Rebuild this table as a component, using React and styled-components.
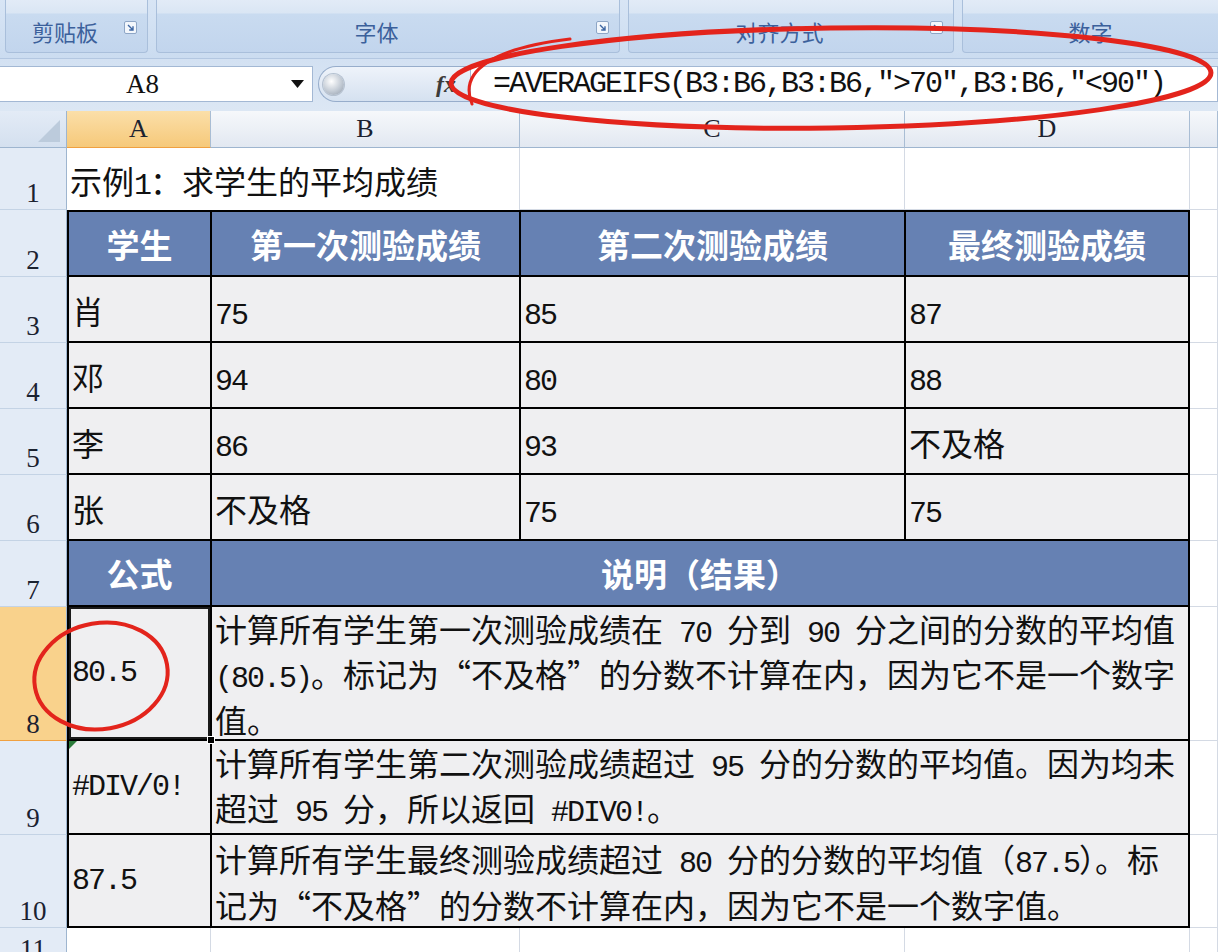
import styled, { createGlobalStyle } from 'styled-components';

const GlobalStyle = createGlobalStyle`
  html, body {
    margin: 0;
    padding: 0;
    background: #ffffff;
    overflow: hidden;
  }
  body {
    font-family: "Noto Sans CJK SC", "Noto Sans", sans-serif;
  }
`;

const columns = ['A', 'B', 'C', 'D', 'E'];

const scores = [
  ['肖', '75', '85', '87'],
  ['邓', '94', '80', '88'],
  ['李', '86', '93', '不及格'],
  ['张', '不及格', '75', '75'],
];

const results = [
  {
    value: '80.5',
    selected: true,
    lines: [
      '计算所有学生第一次测验成绩在 70 分到 90 分之间的分数的平均值',
      '(80.5)。标记为“不及格”的分数不计算在内，因为它不是一个数字',
      '值。',
    ],
  },
  {
    value: '#DIV/0!',
    flagged: true,
    lines: [
      '计算所有学生第二次测验成绩超过 95 分的分数的平均值。因为均未',
      '超过 95 分，所以返回 #DIV0!。',
    ],
  },
  {
    value: '87.5',
    lines: [
      '计算所有学生最终测验成绩超过 80 分的分数的平均值（87.5）。标',
      '记为“不及格”的分数不计算在内，因为它不是一个数字值。',
    ],
  },
];

// latin runs are drawn in a half-width mono face, like SimSun does
function Mixed({ text }) {
  return (
    <span>
      {text.split(/([\x20-\x7e]+)/).map((part, i) =>
        /[\x21-\x7e]/.test(part) ? <Latin key={i}>{part}</Latin> : part
      )}
    </span>
  );
}

function LauncherIcon() {
  return (
    <svg width="13" height="13" viewBox="0 0 13 13">
      <rect x="0.5" y="0.5" width="12" height="12" rx="1.5" fill="#f3f7fc" stroke="#8ea6c6" />
      <path d="M4 4 L9 9 M9 5.2 V9 H5.2" stroke="#3d66a3" strokeWidth="1.4" fill="none" />
    </svg>
  );
}

function App() {
  return (
    <Page>
      <GlobalStyle />

      <Ribbon>
        <Group $width="143px">
          <GroupLabel>剪贴板</GroupLabel>
          <Launcher><LauncherIcon /></Launcher>
        </Group>
        <Group $width="464px">
          <GroupLabel>字体</GroupLabel>
          <Launcher><LauncherIcon /></Launcher>
        </Group>
        <Group $width="326px">
          <GroupLabel>对齐方式</GroupLabel>
          <Launcher><LauncherIcon /></Launcher>
        </Group>
        <Group $width="280px">
          <GroupLabel>数字</GroupLabel>
          <Launcher><LauncherIcon /></Launcher>
        </Group>
      </Ribbon>

      <FormulaBar>
        <NameBox>
          <NameText>A8</NameText>
          <svg width="13" height="8" viewBox="0 0 13 8">
            <path d="M0 0 H13 L6.5 8 Z" fill="#111" />
          </svg>
        </NameBox>
        <FxPill>
          <Knob />
          <FxLabel>fx</FxLabel>
        </FxPill>
        <FormulaInput>=AVERAGEIFS(B3:B6,B3:B6,″&gt;70″,B3:B6,″&lt;90″)</FormulaInput>
      </FormulaBar>

      <Sheet>
        <Corner>
          <svg width="22" height="22" viewBox="0 0 22 22">
            <path d="M22 0 V22 H0 Z" fill="#bccbdc" />
          </svg>
        </Corner>
        {columns.map((c, i) => (
          <ColHead key={c} $col={i + 2} $active={c === 'A'}>{c === 'E' ? '' : c}</ColHead>
        ))}
        {Array.from({ length: 11 }, (_, i) => (
          <RowHead key={i} $row={i + 2} $active={i + 1 === 8}>{i + 1}</RowHead>
        ))}

        <TitleCell><Mixed text="示例1：求学生的平均成绩" /></TitleCell>
        <Blank $col={4} $row={2} />
        <Blank $col={5} $row={2} />
        <Blank $col={6} $row={2} />

        <Table>
          <HeadCell>学生</HeadCell>
          <HeadCell>第一次测验成绩</HeadCell>
          <HeadCell>第二次测验成绩</HeadCell>
          <HeadCell>最终测验成绩</HeadCell>

          {scores.map((row) =>
            row.map((v, j) => (
              <DataCell key={row[0] + j}><Mixed text={v} /></DataCell>
            ))
          )}

          <HeadCell>公式</HeadCell>
          <HeadCell $span={3}>说明（结果）</HeadCell>

          {results.map((r) => [
            <ValueCell key={r.value} $selected={r.selected} $flagged={r.flagged}>
              <Latin>{r.value}</Latin>
            </ValueCell>,
            <NoteCell key={r.value + '-note'}>
              {r.lines.map((line, k) => (
                <NoteLine key={k}><Mixed text={line} /></NoteLine>
              ))}
            </NoteCell>,
          ])}
        </Table>

        {Array.from({ length: 9 }, (_, i) => (
          <Blank key={'e' + i} $col={6} $row={i + 3} />
        ))}
        {columns.map((c, i) => (
          <Blank key={'r11' + c} $col={i + 2} $row={12} />
        ))}
      </Sheet>

      <Marks width="1218" height="952" viewBox="0 0 1218 952">
        <g fill="none" stroke="#e3241c" strokeLinecap="round">
          <ellipse cx="831" cy="78" rx="380" ry="50" strokeWidth="5" transform="rotate(-0.8 831 78)" />
          <path d="M 570 39 C 495 48, 458 70, 472 104" strokeWidth="3" />
          <ellipse cx="101" cy="676" rx="67" ry="53" strokeWidth="4" transform="rotate(-10 101 676)" />
        </g>
      </Marks>
    </Page>
  );
}

const Page = styled.div`
  position: relative;
  width: 1218px;
  height: 952px;
  overflow: hidden;
  display: flex;
  flex-direction: column;
  background: #ffffff;
`;

const Ribbon = styled.div`
  height: 58px;
  flex-shrink: 0;
  display: flex;
  gap: 8px;
  padding-left: 5px;
  overflow: hidden;
  background: linear-gradient(#d8e5f5, #cbdcf0);
`;

const Group = styled.div`
  box-sizing: border-box;
  width: ${(p) => p.$width};
  flex-shrink: 0;
  height: 53px;
  display: flex;
  padding-top: 13px;
  border: 1px solid #a9bfdb;
  border-top: none;
  border-radius: 0 0 4px 4px;
  background: linear-gradient(
    to bottom,
    #e2ebf7 0,
    #dae6f4 13px,
    #c9dbf0 14px,
    #c2d5ed 100%
  );
`;

const GroupLabel = styled.div`
  flex: 1;
  display: flex;
  align-items: center;
  justify-content: center;
  padding-bottom: 3px;
  font-size: 22px;
  color: #3b609b;
`;

const Launcher = styled.div`
  margin: 8px 10px 0 0;
  line-height: 0;
`;

const FormulaBar = styled.div`
  height: 53px;
  flex-shrink: 0;
  box-sizing: border-box;
  padding: 7px 0 9px;
  display: flex;
  gap: 5px;
  background: linear-gradient(#d3e1f2, #dce7f4);
  border-top: 1px solid #b3c7e1;
`;

const NameBox = styled.div`
  box-sizing: border-box;
  width: 313px;
  display: flex;
  align-items: center;
  padding: 0 8px 0 0;
  background: #ffffff;
  border: 1px solid #a3b8d4;
  border-left: none;
`;

const NameText = styled.div`
  flex: 1;
  text-align: center;
  padding-right: 6px;
  font-family: "Liberation Serif", serif;
  font-size: 27px;
  color: #111;
`;

const FxPill = styled.div`
  box-sizing: border-box;
  width: 152px;
  display: flex;
  align-items: center;
  justify-content: space-between;
  padding: 0 14px 0 4px;
  border: 1px solid #97adcb;
  border-right: none;
  border-radius: 19px 0 0 19px;
  background: linear-gradient(#eef3fa, #d5e1f0);
`;

const Knob = styled.div`
  width: 21px;
  height: 21px;
  border-radius: 50%;
  background: radial-gradient(circle at 40% 35%, #ffffff 0, #c2cad4 55%, #8e99a8 100%);
  box-shadow: 0 0 0 1px #b5c1d0;
`;

const FxLabel = styled.div`
  font-family: "Liberation Serif", serif;
  font-style: italic;
  font-weight: bold;
  font-size: 24px;
  color: #3b3b3b;
`;

const FormulaInput = styled.div`
  flex: 1;
  box-sizing: border-box;
  display: flex;
  align-items: center;
  padding-left: 22px;
  margin-left: -5px;
  background: #ffffff;
  border: 1px solid #a3b8d4;
  font-family: "Liberation Mono", monospace;
  font-size: 30px;
  letter-spacing: -2px;
  color: #111;
  white-space: nowrap;
`;

const Sheet = styled.div`
  display: grid;
  grid-template-columns: 67px 144px 309px 385px 285px 1fr;
  grid-template-rows: 37px 62px 67px repeat(5, 66px) 134px 94px 93px 38px;
  background: #ffffff;
`;

const Corner = styled.div`
  grid-column: 1;
  grid-row: 1;
  display: flex;
  align-items: flex-end;
  justify-content: flex-end;
  padding: 0 6px 5px 0;
  background: linear-gradient(#e3ebf6, #d4e0ef);
  border-right: 1px solid #9eb5cf;
  border-bottom: 1px solid #9eb5cf;
`;

const ColHead = styled.div`
  grid-column: ${(p) => p.$col};
  grid-row: 1;
  display: flex;
  align-items: center;
  justify-content: center;
  font-family: "Liberation Serif", serif;
  font-size: 26px;
  color: #1b2230;
  border-right: 1px solid #a9bdd4;
  border-bottom: 1px solid ${(p) => (p.$active ? '#f0a040' : '#9eb5cf')};
  background: ${(p) =>
    p.$active
      ? 'linear-gradient(#fbdfa9, #f6c97a)'
      : 'linear-gradient(#f6f8fb, #e2e8f1)'};
`;

const RowHead = styled.div`
  grid-column: 1;
  grid-row: ${(p) => p.$row};
  display: flex;
  align-items: flex-end;
  justify-content: center;
  padding-bottom: 2px;
  font-family: "Liberation Serif", serif;
  font-size: 27px;
  line-height: 1;
  color: #1b2230;
  border-right: 1px solid #9eb5cf;
  border-bottom: 1px solid ${(p) => (p.$active ? '#f0a040' : '#c4d3e5')};
  background: ${(p) => (p.$active ? '#f9d28c' : '#e3ebf6')};
`;

const Blank = styled.div`
  grid-column: ${(p) => p.$col};
  grid-row: ${(p) => p.$row};
  border-right: 1px solid #d4dae4;
  border-bottom: 1px solid #d4dae4;
`;

const TitleCell = styled.div`
  grid-column: 2 / 4;
  grid-row: 2;
  display: flex;
  align-items: flex-end;
  padding: 0 0 2px 3px;
  font-size: 32px;
  line-height: 44px;
  color: #111;
  white-space: nowrap;
  border-right: 1px solid #d4dae4;
`;

const Latin = styled.span`
  font-family: "Liberation Mono", monospace;
  font-size: 30px;
  letter-spacing: -2px;
  white-space: pre;
`;

const Table = styled.div`
  grid-column: 2 / 6;
  grid-row: 3 / 12;
  display: grid;
  grid-template-columns: 141px 307px 383px 1fr;
  grid-template-rows: 63px repeat(5, 64px) 132px 92px 91px;
  gap: 2px;
  padding: 2px;
  background: #000000;
`;

const HeadCell = styled.div`
  grid-column: span ${(p) => p.$span || 1};
  display: flex;
  align-items: center;
  justify-content: center;
  background: #6681b3;
  color: #ffffff;
  font-weight: bold;
  font-size: 33px;
  white-space: nowrap;
`;

const DataCell = styled.div`
  display: flex;
  align-items: center;
  padding: 2px 0 0 3px;
  background: #efeff1;
  color: #111;
  font-size: 32px;
  white-space: nowrap;
`;

const ValueCell = styled(DataCell)`
  position: relative;
  padding-top: 0;
  box-shadow: ${(p) => (p.$selected ? 'inset 0 0 0 2px #1a1a1a' : 'none')};

  &::after {
    content: '';
    display: ${(p) => (p.$selected ? 'block' : 'none')};
    position: absolute;
    right: -5px;
    bottom: -5px;
    width: 6px;
    height: 6px;
    background: #000;
    border: 1px solid #ffffff;
    z-index: 2;
  }

  &::before {
    content: '';
    display: ${(p) => (p.$flagged ? 'block' : 'none')};
    position: absolute;
    left: 0;
    top: 0;
    border-top: 8px solid #2a7b3a;
    border-right: 8px solid transparent;
  }
`;

const NoteCell = styled.div`
  grid-column: span 3;
  display: flex;
  flex-direction: column;
  justify-content: center;
  padding: 2px 0 0 3px;
  background: #efeff1;
  color: #111;
  font-size: 32px;
`;

const NoteLine = styled.div`
  line-height: 39.5px;
  white-space: nowrap;
`;

const Marks = styled.svg`
  position: absolute;
  left: 0;
  top: 0;
  pointer-events: none;
`;

export default App;
